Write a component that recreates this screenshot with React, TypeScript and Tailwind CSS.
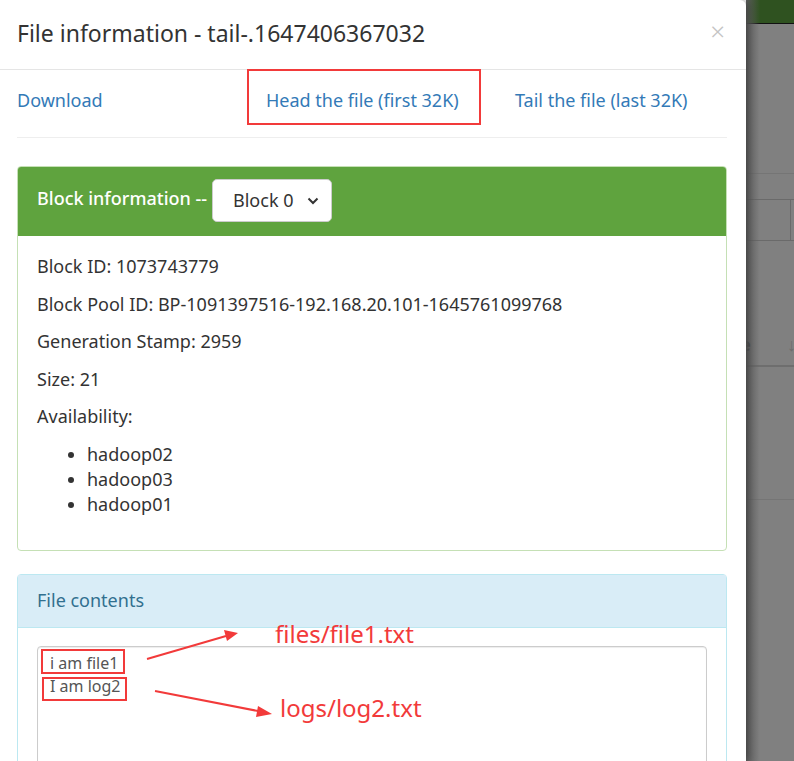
import React from "react";

const font = { fontFamily: '"Noto Sans", "Open Sans", sans-serif' };

export default function App() {
  return (
    <div className="relative w-[794px] h-[761px] overflow-hidden flex bg-white" style={font}>
      {/* Modal */}
      <div className="w-[746px] h-full bg-white rounded-tr-[6px] flex flex-col shrink-0 relative z-10 shadow-[2px_0_8px_rgba(0,0,0,0.35)]">
        <div className="h-[70px] border-b border-[#e5e5e5] flex items-center justify-between pl-[17px] pr-[21px] shrink-0">
          <h4 className="text-[23px] text-[#333] leading-none -mt-[2px]">File information - tail-.1647406367032</h4>
          <span className="text-[26px] leading-none text-[#c4c4c4] font-light -mt-[8px]">×</span>
        </div>
        <div className="ml-[17px] mr-[19px] h-[68px] border-b border-[#eee] grid grid-cols-[249px_249px_1fr] items-center text-[18px] text-[#337ab7] shrink-0">
          <a className="leading-none -mt-[8px]">Download</a>
          <div className="relative -mt-[8px]">
            <a className="leading-none block">Head the file (first 32K)</a>
            <div className="absolute left-[-19px] top-[-22px] w-[234px] h-[56px] border-2 border-[#f23a3a]" />
          </div>
          <a className="leading-none -mt-[8px]">Tail the file (last 32K)</a>
        </div>

        {/* Block panel */}
        <div className="ml-[17px] mr-[19px] mt-[28px] border border-[#c5e0b5] rounded-[4px] shrink-0 overflow-hidden">
          <div className="h-[69px] bg-[#5fa33e] flex items-center px-[19px]">
            <span className="text-[18px] text-white font-medium -mt-[7px]">Block information --</span>
            <div className="ml-[5px] w-[120px] h-[43px] bg-white rounded-[5px] border border-[#ccc] flex items-center justify-between pl-[20px] pr-[12px] -mt-[2px]">
              <span className="text-[18px] text-[#333]">Block 0</span>
              <svg width="12" height="8" viewBox="0 0 12 8"><path d="M1.5 1.5 L6 6 L10.5 1.5" fill="none" stroke="#333" strokeWidth="2" /></svg>
            </div>
          </div>
          <div className="pl-[19px] pt-[18px] pb-[33px] text-[18px] text-[#333] leading-[25px]">
            <p className="mb-[12.5px]">Block ID: 1073743779</p>
            <p className="mb-[12.5px]">Block Pool ID: BP-1091397516-192.168.20.101-1645761099768</p>
            <p className="mb-[12.5px]">Generation Stamp: 2959</p>
            <p className="mb-[12.5px]">Size: 21</p>
            <p className="mb-[12.5px]">Availability:</p>
            <ul className="list-disc pl-[50px]">
              <li>hadoop02</li>
              <li>hadoop03</li>
              <li>hadoop01</li>
            </ul>
          </div>
        </div>

        {/* File contents panel */}
        <div className="ml-[17px] mr-[19px] mt-[23px] border border-[#bce8f1] rounded-t-[4px] flex-1 flex flex-col">
          <div className="h-[53px] bg-[#d9edf7] border-b border-[#bce8f1] flex items-center px-[19px] shrink-0">
            <span className="text-[18px] text-[#31708f] -mt-[1px]">File contents</span>
          </div>
          <div className="px-[19px] pt-[18px] flex-1">
            <div className="border border-[#ccc] rounded-[4px] h-[200px] pl-[12px] pt-[5px] text-[16px] text-[#555] leading-[23px] shadow-[inset_0_1px_1px_rgba(0,0,0,0.075)]">
              <div>i am file1</div>
              <div>I am log2</div>
            </div>
          </div>
        </div>
      </div>

      {/* Backdrop strip */}
      <div className="flex-1 flex flex-col bg-[#808080] relative">
        <div className="h-[24px] bg-[#2f5220] border-b border-[#111] shrink-0" />
        <div className="h-[150px] border-b border-[#757575] shrink-0" />
        <div className="h-[25px] shrink-0" />
        <div className="h-[42px] border-y border-[#6a6a6a] shrink-0 flex justify-end">
          <div className="w-[4px] border-l border-[#6a6a6a]" />
        </div>
        <div className="h-[124px] shrink-0 flex items-end justify-between pb-[9px]">
          <span className="text-[18px] leading-[24px] font-bold text-[#222] -ml-[6px]">e</span>
          <span className="text-[18px] leading-[24px] text-[#6d6d6d] mr-[-2px]">↓</span>
        </div>
        <div className="h-[2px] bg-[#6e6e6e] shrink-0" />
        <div className="h-[133px] border-b border-[#757575] shrink-0" />
        <div className="absolute inset-y-0 left-0 w-[14px] bg-gradient-to-r from-[#5f5f5f] to-transparent" />
      </div>

      {/* Annotations */}
      <div className="absolute left-[41px] top-[649px] w-[84px] h-[25px] border-2 border-[#f23a3a] z-20" />
      <div className="absolute left-[42px] top-[677px] w-[85px] h-[24px] border-2 border-[#f23a3a] z-20" />
      <svg className="absolute left-0 top-0 z-20 pointer-events-none" width="794" height="761">
        <line x1="147" y1="659" x2="226" y2="636" stroke="#f23a3a" strokeWidth="2" />
        <polygon points="238,633 224,630 227,641" fill="#f23a3a" />
        <line x1="155" y1="691" x2="258" y2="711" stroke="#f23a3a" strokeWidth="2" />
        <polygon points="272,714 258,706 256,717" fill="#f23a3a" />
      </svg>
      <span className="absolute left-[275px] top-[618px] text-[24px] text-[#f23a3a] leading-[32px] z-20">files/file1.txt</span>
      <span className="absolute left-[280px] top-[692px] text-[24px] text-[#f23a3a] leading-[32px] z-20">logs/log2.txt</span>
    </div>
  );
}
